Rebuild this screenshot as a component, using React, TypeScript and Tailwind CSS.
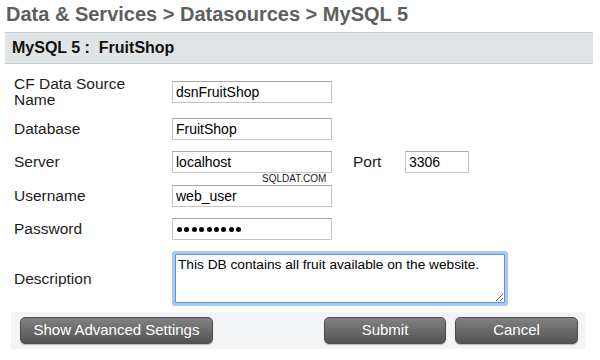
import React from "react";

const inputCls =
  "h-[22px] border border-[#c4c4c4] border-t-[#a9a9a9] bg-white px-[3px] text-[14px] text-black outline-none font-['Liberation_Sans',Arial,sans-serif]";

const labelCls = "w-[158px] shrink-0 text-[15.5px] leading-[16px] text-[#1c1c1c]";

const btnCls =
  "h-[27px] rounded-[5px] border border-[#4e4e4e] bg-gradient-to-b from-[#828282] to-[#535353] text-[15px] text-white shadow-[0_1px_1px_rgba(0,0,0,0.25)] font-['Liberation_Sans',Arial,sans-serif]";

export default function App() {
  return (
    <div className="relative h-[360px] w-[600px] overflow-hidden bg-white font-['Liberation_Sans',Arial,sans-serif]">
      <div className="pl-[6px] pt-[1px] text-[20px] font-bold leading-[26px] text-[#5e5e5e]">
        Data &amp; Services &gt; Datasources &gt; MySQL 5
      </div>

      <div className="ml-[5px] mt-[5px] flex h-[32px] w-[588px] items-center border-y border-[#c3cfd4] bg-[#e1e4e5] pl-[7px] text-[16px] font-bold leading-[18px] text-[#111]">
        MySQL 5 :&nbsp; FruitShop
      </div>

      <div className="pl-[14px]">
        <div className="mt-[12px] flex h-[32px] items-center">
          <div className={labelCls}>
            CF Data Source
            <br />
            Name
          </div>
          <input className={`${inputCls} w-[160px]`} defaultValue="dsnFruitShop" />
        </div>

        <div className="mt-[10px] flex h-[22px] items-center">
          <div className={labelCls}>Database</div>
          <input className={`${inputCls} w-[160px]`} defaultValue="FruitShop" />
        </div>

        <div className="mt-[11px] flex h-[22px] items-center">
          <div className={labelCls}>Server</div>
          <input className={`${inputCls} w-[160px]`} defaultValue="localhost" />
          <div className="ml-[21px] w-[52px] text-[15.5px] leading-[16px] text-[#1c1c1c]">Port</div>
          <input className={`${inputCls} w-[64px]`} defaultValue="3306" />
        </div>

        <div className="mt-[12px] flex h-[22px] items-center">
          <div className={labelCls}>Username</div>
          <input className={`${inputCls} w-[160px]`} defaultValue="web_user" />
        </div>

        <div className="mt-[11px] flex h-[22px] items-center">
          <div className={labelCls}>Password</div>
          <div className="flex h-[22px] w-[160px] items-center gap-[2.4px] border border-[#c4c4c4] border-t-[#a9a9a9] bg-white pl-[4px]">
            {Array.from({ length: 9 }).map((_, i) => (
              <span key={i} className="block h-[5px] w-[5px] rounded-full bg-black" />
            ))}
          </div>
        </div>

        <div className="mt-[11px] flex h-[55px] items-center">
          <div className={labelCls}>Description</div>
          <div className="p-[3px]">
            <textarea
              className="block h-[49px] w-[330px] rounded-[1px] border border-[#5f93df] bg-white px-[2px] pt-[1px] text-[13.7px] leading-[17px] text-black shadow-[0_0_0_3px_#a8c7f1] outline-none font-['Liberation_Sans',Arial,sans-serif]"
              defaultValue="This DB contains all fruit available on the website."
            />
          </div>
        </div>
      </div>

      <div className="ml-[11px] mt-[6px] flex h-[37px] w-[574px] items-center bg-[#f2f4f5] pl-[9px] pr-[7px]">
        <button className={`${btnCls} w-[193px]`}>Show Advanced Settings</button>
        <div className="flex-1" />
        <button className={`${btnCls} w-[122px]`}>Submit</button>
        <button className={`${btnCls} ml-[9px] w-[123px]`}>Cancel</button>
      </div>

      <div className="absolute left-[262px] top-[173px] text-[10px] leading-[12px] text-[#222]">SQLDAT.COM</div>
    </div>
  );
}
